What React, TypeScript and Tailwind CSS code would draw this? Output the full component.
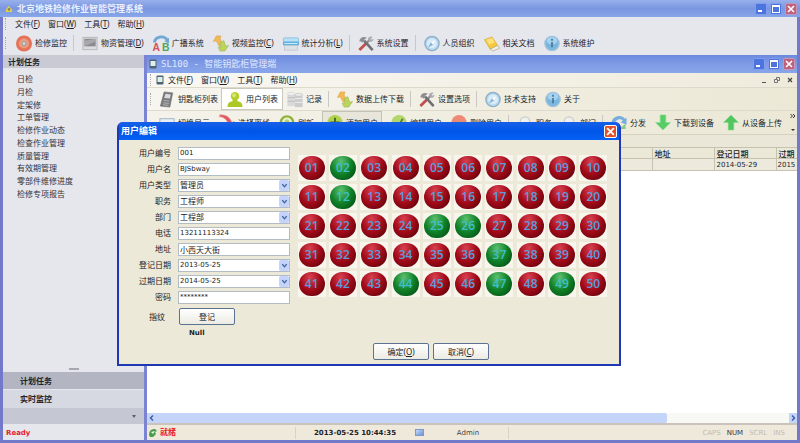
import type { ReactNode } from "react";

type IconName =
  | "monitor" | "goods" | "broadcast" | "swap" | "stats" | "tools" | "compass" | "docs" | "info"
  | "key" | "user" | "database" | "view" | "offline" | "refresh" | "add" | "edit" | "remove"
  | "magnify" | "dispatch" | "download" | "upload";

const drawings: Record<IconName, ReactNode> = {
  monitor: (
    <>
      <circle cx="9" cy="9" r="8.500" fill="#e5735a" />
      <circle cx="9" cy="9" r="5.400" fill="#ee9a80" />
      <circle cx="9" cy="9" r="3" fill="#a9a49f" />
      <circle cx="9" cy="9" r="1.400" fill="#e2d7d0" />
    </>
  ),
  goods: (
    <>
      <rect x="1.500" y="2.500" width="15" height="13" fill="#dcdcde" stroke="#b5b5b9" />
      <rect x="3" y="4" width="12" height="8" fill="#8c8c90" />
      <path d="M3 12V6l12-2v3z" fill="#a9a9ad" />
    </>
  ),
  broadcast: (
    <>
      <path d="M2 8C3 1 13 0 16 6" fill="none" stroke="#6fa9d6" strokeWidth="3" />
      <path d="M17.500 3v6l-5-2z" fill="#6fa9d6" />
      <text x="0" y="17" fontSize="11" fontWeight="700" fontFamily="Liberation Sans, sans-serif" fill="#d4525a">A</text>
      <text x="10" y="17" fontSize="11" fontWeight="700" fontFamily="Liberation Sans, sans-serif" fill="#4fa653">B</text>
    </>
  ),
  swap: (
    <>
      <path d="M4 1h5l-1 3 3 6-4 2-3-6-3 1z" fill="#f2b955" stroke="#dba043" strokeWidth=".6" />
      <path d="M13 17H8l-2-4 3 0-1-5 4-2 2 6 3-1z" fill="#bcd45c" stroke="#94b548" strokeWidth=".6" />
    </>
  ),
  stats: (
    <>
      <rect x="1" y="3" width="16" height="5" rx="1" fill="#b8dff2" stroke="#79b9dc" strokeWidth=".7" />
      <rect x="0.500" y="7" width="17" height="4" rx="1" fill="#5eb0de" />
      <rect x="2" y="11" width="14" height="5" fill="#dbe1e6" stroke="#b3bcc4" strokeWidth=".6" />
      <path d="M2 9h14" stroke="#d7effb" />
    </>
  ),
  tools: (
    <>
      <path d="M2 16l7-7" stroke="#c0504f" strokeWidth="3" />
      <path d="M9 9l4-4" stroke="#8d8d92" strokeWidth="2.400" />
      <path d="M16 16L7 6" stroke="#6f6f74" strokeWidth="2.800" />
      <path d="M2 7C2 3 6 1 10 3L7 5l1 2-3 1-1-1z" fill="#8d8d92" />
      <path d="M11 5c0-3 3-4 5-3l-2 2 1 1 2-1c0 2-2 4-4 3z" fill="#aaaab0" />
    </>
  ),
  compass: (
    <>
      <circle cx="9" cy="9" r="7.500" fill="#b9d9ef" stroke="#8fb0ca" strokeWidth="1.500" />
      <circle cx="9" cy="9" r="5.300" fill="#d9ecf8" />
      <path d="M13.500 4.500l-3.300 5.700-5.700 3.300 3.300-5.700z" fill="#8ab6d8" />
      <path d="M13.500 4.500l-3.300 5.700-2.400-2.400z" fill="#fff" />
    </>
  ),
  docs: (
    <>
      <path d="M1 5l8-3 6 9-8 4z" fill="#f6c93c" stroke="#d9a52c" strokeWidth=".7" />
      <path d="M3 5l6-2 3 5-6 2z" fill="#fbe27d" />
      <path d="M7 15l8-4 2 3-7 3z" fill="#ececec" stroke="#b8a87c" strokeWidth=".7" />
    </>
  ),
  info: (
    <>
      <circle cx="9" cy="9" r="7.500" fill="#7db6dd" stroke="#9cc1dc" strokeWidth="1.500" />
      <ellipse cx="9" cy="6" rx="5.500" ry="4" fill="#a6d2ee" />
      <path d="M9 7.500V13M9 4v2" stroke="#3c6f99" strokeWidth="1.600" />
    </>
  ),
  key: (
    <>
      <path d="M6 1l9 1-3 15-10-1z" fill="#7b7b7e" stroke="#636366" strokeWidth=".6" />
      <path d="M7.500 3l5.500.7-1 4.300-6-.7z" fill="#d7dadc" />
      <path d="M5.500 10l6 .7M5 12.500l6 .7M4.700 14.500l6 .7" stroke="#b6b6b8" />
    </>
  ),
  user: (
    <>
      <circle cx="9" cy="5.500" r="4.500" fill="#b7cf2e" />
      <path d="M1 17c0-5 3-6 5-6l1-2h4l1 2c2 0 5 1 5 6z" fill="#adc825" />
      <circle cx="8" cy="4.500" r="2" fill="#d8e674" />
    </>
  ),
  database: (
    <>
      <path d="M1 3h8v13H1z" fill="#d9d9d9" />
      <ellipse cx="5" cy="3" rx="4" ry="1.700" fill="#f1f1f1" stroke="#c4c4c4" strokeWidth=".5" />
      <path d="M1 7h8M1 11h8" stroke="#bdbdbd" />
      <path d="M9 4h8v13H9z" fill="#cbcbcd" />
      <ellipse cx="13" cy="4" rx="4" ry="1.700" fill="#e9e9e9" stroke="#b4b4b4" strokeWidth=".5" />
      <path d="M9 8h8M9 12h8" stroke="#eee" />
    </>
  ),
  view: <rect x="1.500" y="5" width="15" height="10" fill="#e9eef5" stroke="#9fb0c6" />,
  offline: <path d="M1 1c8-1 12 4 13 8l3-1-4 7-6-4 3-1C9 6 5 3 1 3z" fill="#e0585e" stroke="#eaa0a2" strokeWidth=".8" />,
  refresh: (
    <>
      <circle cx="9" cy="9" r="6.500" fill="#eef4d2" stroke="#8fb23c" strokeWidth="2.600" />
      <circle cx="9" cy="8" r="2.500" fill="#b9cf70" />
    </>
  ),
  add: (
    <>
      <circle cx="9" cy="9" r="8" fill="#b3d04a" />
      <path d="M9 4v10M4 9h10" stroke="#45652a" strokeWidth="2" />
    </>
  ),
  edit: (
    <>
      <circle cx="9" cy="9" r="8" fill="#b3d66b" />
      <path d="M5 9l3 4 5-8" fill="none" stroke="#587f33" strokeWidth="1.800" />
    </>
  ),
  remove: (
    <>
      <circle cx="9" cy="9" r="8" fill="#ec8a74" />
      <path d="M5 10h8" stroke="#fff" strokeWidth="2" />
    </>
  ),
  magnify: (
    <>
      <circle cx="9" cy="8" r="5" fill="#efefee" stroke="#cacaca" strokeWidth="1.300" />
      <path d="M12 12l4 4" stroke="#c0c0c0" strokeWidth="2" />
    </>
  ),
  dispatch: (
    <>
      <path d="M1 9C2 2 12 0 15 5l2-1v7l-6-2 2-2C10 4 5 6 5 10z" fill="#76ace0" />
      <path d="M14 12l2-2v6H8z" fill="#86c98a" />
    </>
  ),
  download: <path d="M6 1h6v8h5l-8 8-8-8h5z" fill="#58cd66" stroke="#8ade92" strokeWidth=".7" />,
  upload: <path d="M6 17h6V9h5L9 1 1 9h5z" fill="#52c560" stroke="#8ade92" strokeWidth=".7" />,
};

function Icon({ name }: { name: IconName }) {
  return (
    <svg viewBox="0 0 18 18" className="h-[17px] w-[18px] shrink-0" aria-hidden="true">
      {drawings[name]}
    </svg>
  );
}

function Hot({ text, hotkey }: { text: string; hotkey?: string }) {
  return (
    <span>
      {text}
      {hotkey && <>(<u>{hotkey}</u>)</>}
    </span>
  );
}

function Tool({ icon, text, hotkey }: { icon: IconName; text: string; hotkey?: string }) {
  return (
    <button type="button" className="flex h-full shrink-0 items-center gap-[2px] whitespace-nowrap">
      <Icon name={icon} />
      <Hot text={text} hotkey={hotkey} />
    </button>
  );
}

function Grip() {
  return <span className="h-3 w-0.5 shrink-0 border-l border-dotted border-[#a9a9b4]" />;
}

function MenuBar() {
  return (
    <nav className="flex items-center gap-[8px]">
      <button type="button"><Hot text="文件" hotkey="F" /></button>
      <button type="button"><Hot text="窗口" hotkey="W" /></button>
      <button type="button"><Hot text="工具" hotkey="T" /></button>
      <button type="button"><Hot text="帮助" hotkey="H" /></button>
    </nav>
  );
}

function CaptionButtons() {
  return (
    <div className="flex gap-[3px]">
      <button type="button" aria-label="最小化" className="flex h-3 w-3 items-end rounded-xs border border-[#7f9cee] bg-[#4d74de] p-0.5">
        <span className="h-0.5 w-1 bg-white" />
      </button>
      <button type="button" aria-label="最大化" className="h-3 w-3 rounded-xs border border-[#7f9cee] bg-[#4d74de] p-px">
        <span className="block h-2 w-2 border border-t-2 border-white" />
      </button>
      <button type="button" aria-label="关闭" className="h-3 w-3 rounded-xs border border-[#c596bd] bg-[#c0617c] p-px">
        <Cross />
      </button>
    </div>
  );
}

function Cross() {
  return (
    <svg viewBox="0 0 8 8" className="block h-full w-full" aria-hidden="true">
      <path d="M1 1l6 6M7 1L1 7" stroke="#fff" strokeWidth="1.600" />
    </svg>
  );
}

function DeviceIcon() {
  return (
    <svg viewBox="0 0 8 10" className="h-[10px] w-2 shrink-0" aria-hidden="true">
      <rect x=".5" y=".5" width="7" height="9" rx="1" fill="#4d6477" />
      <rect x="1.500" y="2" width="5" height="5" fill="#dff0ea" />
    </svg>
  );
}

const tasks = ["日检", "月检", "定架修", "工单管理", "检修作业动态", "检查作业管理", "质量管理", "有效期管理", "零部件维修进度", "检修专项报告"];

function Sidebar() {
  return (
    <aside className="flex w-[141px] shrink-0 flex-col">
      <h2 className="h-[13px] bg-[#c9cad4] pl-[5px] text-[8px] leading-[13px] font-bold">计划任务</h2>
      <ul className="mt-[5px] grid h-[127px] grid-rows-10 pl-[14px] text-[#33333a]">
        {tasks.map((task) => (
          <li key={task} className="flex items-center">
            <button type="button">{task}</button>
          </li>
        ))}
      </ul>
      <div className="flex-1" />
      <div className="mx-auto mb-0.5 h-0.5 w-[10px] bg-[#a5a7b2]" />
      <button type="button" className="h-[17px] bg-[#b3b6c2] pl-[17px] text-left font-bold">计划任务</button>
      <button type="button" className="h-[19px] border-t border-[#e6e7ee] bg-[#d6d8e2] pl-[17px] text-left font-bold">实时监控</button>
      <div className="flex h-4 items-center justify-end bg-[#c5c7d3] pr-2">
        <svg viewBox="0 0 4 3" className="h-[3px] w-1" aria-hidden="true"><path d="M0 0h4L2 3z" fill="#5c5f70" /></svg>
      </div>
      <p className="h-[16px] pl-[3px] font-['DejaVu_Sans',sans-serif] text-[7px] leading-[18px] font-bold text-[#e8202c]">Ready</p>
    </aside>
  );
}

function Arrow({ className, d }: { className: string; d: string }) {
  return (
    <svg viewBox="0 0 8 8" className={className} aria-hidden="true">
      <path d={d} fill="none" stroke="#3f5f9f" strokeWidth="1.500" />
    </svg>
  );
}

function DeviceWindow() {
  return (
    <section className="flex min-w-0 flex-1 flex-col bg-[#f0ecdd]">
      <header className="flex h-[18px] shrink-0 items-center gap-1 bg-linear-to-b from-[#6c8ade] via-[#7f9be4] to-[#89a5ea] px-0.5 text-[#dfe8ff]">
        <DeviceIcon />
        <h2 className="flex-1 font-['DejaVu_Sans_Mono','Noto_Sans_CJK_SC',monospace] text-[9px]">SL100 - 智能钥匙柜管理端</h2>
        <CaptionButtons />
      </header>
      <div className="flex h-[14px] shrink-0 items-center gap-[4px] bg-linear-to-r from-[#f8f7f2] to-[#efebdc] pr-1 pl-[3px]">
        <Grip />
        <DeviceIcon />
        <div className="flex-1"><MenuBar /></div>
        <div className="flex gap-[7px] text-[#5b5b5b]">
          <button type="button" aria-label="最小化子窗口" className="flex h-[6px] w-[5px] items-end"><span className="h-px w-1 bg-[#555]" /></button>
          <button type="button" aria-label="还原子窗口">
            <svg viewBox="0 0 6 6" className="h-[6px] w-[6px]" aria-hidden="true"><path d="M.5 2.500h3v3h-3zM2.500 2V.5h3v3H4" fill="none" stroke="#666" strokeWidth=".9" /></svg>
          </button>
          <button type="button" aria-label="关闭子窗口">
            <svg viewBox="0 0 6 6" className="h-[6px] w-[6px]" aria-hidden="true"><path d="M1 1l4 4M5 1L1 5" stroke="#444" strokeWidth="1.200" /></svg>
          </button>
        </div>
      </div>
      <div className="flex h-[24px] shrink-0 items-center border-t border-b border-[#dedacb] bg-linear-to-r from-[#f6f5ef] to-[#ece8d6] pl-[3px]">
        <Grip />
        <div className="ml-[6px] flex h-full items-center gap-[3px]">
          <Tool icon="key" text="钥匙柜列表" />
          <div className="h-full border border-[#c9c8bf] bg-white px-1"><Tool icon="user" text="用户列表" /></div>
          <Tool icon="database" text="记录" />
        </div>
        <Divider />
        <Tool icon="swap" text="数据上传下载" />
        <Divider />
        <Tool icon="tools" text="设置选项" />
        <Divider />
        <div className="flex h-full gap-[8px]">
          <Tool icon="compass" text="技术支持" />
          <Tool icon="info" text="关于" />
        </div>
      </div>
      <div className="flex h-[24px] shrink-0 items-center border-b border-[#d6d2c2] bg-linear-to-r from-[#f4f2ea] to-[#ece8d6] pl-[11px]">
        <div className="flex h-full items-center gap-[8px]">
          <Tool icon="view" text="切换显示" />
          <Tool icon="offline" text="选择离线" />
          <Tool icon="refresh" text="刷新" />
          <div className="h-full border border-[#c3c2b6] bg-[#e8e6da] px-[3px]"><Tool icon="add" text="添加用户" /></div>
          <Tool icon="edit" text="编辑用户" />
          <Tool icon="remove" text="删除用户" />
        </div>
        <Divider />
        <div className="flex h-full gap-[8px]">
          <Tool icon="magnify" text="职务" />
          <Tool icon="magnify" text="部门" />
        </div>
        <Divider />
        <div className="flex h-full gap-[8px]">
          <Tool icon="dispatch" text="分发" />
          <Tool icon="download" text="下载到设备" />
          <Tool icon="upload" text="从设备上传" />
        </div>
        <button type="button" aria-label="更多工具" className="ml-auto pr-px">
          <svg viewBox="0 0 6 20" className="h-5 w-[6px]" aria-hidden="true">
            <path d="M.5 1l2 2-2 2M3 1l2 2-2 2" fill="none" stroke="#333" />
            <path d="M1 16h4l-2 2z" fill="#333" />
          </svg>
        </button>
      </div>
      <div className="h-[12px] shrink-0 bg-[#ebe7d8]" />
      <div className="flex-1 overflow-hidden bg-white">
        <table className="w-full table-fixed border-collapse text-left">
          <thead>
            <tr className="h-[11px] border-t border-b border-[#c6c2b2] bg-[#ece8d8]">
              <th className="p-0" aria-label="用户" />
              <th className="w-[62px] border-l border-[#c6c2b2] p-0 pl-0.5 leading-[9px] font-medium">地址</th>
              <th className="w-[62px] border-l border-[#c6c2b2] p-0 pl-0.5 leading-[9px] font-medium">登记日期</th>
              <th className="w-[21px] border-l border-[#c6c2b2] p-0 pl-0.5 leading-[9px] font-medium whitespace-nowrap">过期</th>
            </tr>
          </thead>
          <tbody className="font-['DejaVu_Sans',sans-serif] text-[7px]">
            <tr className="h-[12px] border-b border-[#c6c2b2] bg-[#edeadd]">
              <td className="p-0" />
              <td className="border-l border-[#c6c2b2] p-0" />
              <td className="border-l border-[#c6c2b2] p-0 pl-0.5 leading-[10px]">2014-05-29</td>
              <td className="border-l border-[#c6c2b2] p-0 pl-px leading-[10px] whitespace-nowrap">2015</td>
            </tr>
          </tbody>
        </table>
      </div>
      <div className="flex h-[10px] shrink-0 items-center bg-[#f8f8f5]">
        <div className="flex h-full w-4/5 items-center rounded-r-xs bg-[#c5d5fa]"><Arrow className="ml-px h-2 w-2" d="M5 1.500L2.500 4 5 6.500" /></div>
        <div className="ml-auto flex h-full items-center bg-[#c5d5fa]"><Arrow className="h-2 w-2" d="M3 1.500L5.500 4 3 6.500" /></div>
      </div>
      <footer className="flex h-[17px] shrink-0 items-center border-t-2 border-[#c9c3bb] bg-[#efe9dc] font-['DejaVu_Sans','Noto_Sans_CJK_SC',sans-serif] text-[7px]">
        <svg viewBox="0 0 10 10" className="ml-px h-[10px] w-[10px]" aria-hidden="true">
          <path d="M1 7c0-4 2-6 6-6l2 2-2 1 1 2-3 3-3 0z" fill="#4d9b4f" />
          <path d="M3 4l4-1-2 3z" fill="#e5f1d8" />
        </svg>
        <span className="w-[138px] border-r border-[#d9d3c4] pl-0.5 text-[8px] font-bold text-[#e8202c]">就绪</span>
        <strong className="w-[119px] pl-[18px]">2013-05-25 10:44:35</strong>
        <span className="h-[7px] w-[9px] border border-[#7c98cc] bg-linear-to-br from-[#c6d8f4] to-[#6d92d2]" />
        <span className="w-[85px] border-r border-[#d9d3c4] pl-[4px] text-center text-[#444]">Admin</span>
        <div className="ml-auto flex gap-[6px] pr-3 text-[#c0bcb0]">
          <span>CAPS</span><span className="text-[#333]">NUM</span><span>SCRL</span><span>INS</span>
        </div>
      </footer>
    </section>
  );
}

function Divider() {
  return <span className="mr-[7px] ml-[6px] h-4 w-px shrink-0 bg-[#c9c8c6]" />;
}

type Field = { id: string; label: string; value: string; select?: boolean };

const fields: Field[] = [
  { id: "code", label: "用户编号", value: "001" },
  { id: "name", label: "用户名", value: "BJSbway" },
  { id: "type", label: "用户类型", value: "管理员", select: true },
  { id: "job", label: "职务", value: "工程师", select: true },
  { id: "dept", label: "部门", value: "工程部", select: true },
  { id: "phone", label: "电话", value: "13211113324" },
  { id: "address", label: "地址", value: "小西天大街" },
  { id: "start", label: "登记日期", value: "2013-05-25", select: true },
  { id: "end", label: "过期日期", value: "2014-05-25", select: true },
  { id: "password", label: "密码", value: "********" },
];

const box = "h-[13px] w-full appearance-none rounded-none border border-[#b2bcc4] bg-white py-0 pr-3 pl-px font-['DejaVu_Sans','Noto_Sans_CJK_SC',sans-serif] leading-[11px] text-[#222]";

function FieldRow({ field }: { field: Field }) {
  const size = /^[\x20-\x7e]+$/.test(field.value) ? "text-[7px]" : "text-[8px]";
  return (
    <div className="flex h-4 items-center">
      <label htmlFor={field.id} className="w-[52px] text-right">{field.label}</label>
      <div className="relative ml-[7px] flex w-[112px]">
        {field.select ? (
          <>
            <select id={field.id} defaultValue={field.value} className={`${box} ${size}`}>
              <option>{field.value}</option>
            </select>
            <span className="pointer-events-none absolute inset-y-px right-px flex w-[10px] items-center justify-center rounded-xs bg-[#c3d3fa]">
              <Arrow className="h-[7px] w-[7px]" d="M1.500 2.500L4 5.500 6.500 2.500" />
            </span>
          </>
        ) : (
          <input id={field.id} type="text" defaultValue={field.value} className={`${box} ${size}`} />
        )}
      </div>
    </div>
  );
}

const free = new Set([2, 12, 25, 26, 37, 44, 47, 49]);
const red = "from-[#d8404f] via-[#a00a18] to-[#480006] text-[#5b9bdc]";
const green = "from-[#5cc070] via-[#0f8027] to-[#033f0e] text-[#3cc0d0]";

function KeySlots() {
  return (
    <div className="grid h-[144px] w-[313px] grid-cols-10 grid-rows-5">
      {Array.from({ length: 50 }, (_, i) => i + 1).map((n) => (
        <div key={n} className="flex items-center justify-center">
          <div className="flex h-[26px] w-[28px] items-center justify-center bg-[#f8f5ed]">
            <button
              type="button"
              aria-pressed={free.has(n)}
              className={`h-6 w-[26px] rounded-full bg-radial-[at_42%_22%] font-['Open_Sans','Noto_Sans',sans-serif] text-[12px] leading-6 font-semibold ${free.has(n) ? green : red}`}
            >
              {String(n).padStart(2, "0")}
            </button>
          </div>
        </div>
      ))}
    </div>
  );
}

const push = "h-[17px] w-[56px] rounded-xs border border-[#5b7391] bg-linear-to-b from-white to-[#ecebe3] leading-[15px]";

function UserDialog() {
  return (
    <form role="dialog" aria-label="用户编辑" className="absolute top-[122px] left-[117px] w-[504px] rounded-t-md border-2 border-t-0 border-[#2038b4] bg-[#ece9d8]">
      <header className="flex h-[18px] items-center justify-between rounded-t-sm bg-linear-to-b from-[#1660e8] via-[#0055e8] to-[#0660f4] pr-0.5 pl-0.5 text-white">
        <h2 className="text-[9px] font-bold">用户编辑</h2>
        <button type="button" aria-label="关闭对话框" className="h-[13px] w-[13px] rounded-xs border border-white bg-[#e2512c] p-px"><Cross /></button>
      </header>
      <div className="flex pt-[5px]">
        <div className="w-[177px]">
          {fields.map((field) => <FieldRow key={field.id} field={field} />)}
          <div className="mt-[3px] flex items-center pl-[30px]">
            <label htmlFor="finger" className="w-[30px]">指纹</label>
            <button id="finger" type="button" className={push}>登记</button>
          </div>
          <p className="mt-[3px] pl-[70px] font-['DejaVu_Sans',sans-serif] text-[7px] leading-[10px] font-bold">Null</p>
        </div>
        <div className="pt-[9px]"><KeySlots /></div>
      </div>
      <div className="flex gap-[4px] pt-[5px] pb-[4px] pl-[254px]">
        <button type="submit" className={push}><Hot text="确定" hotkey="O" /></button>
        <button type="button" className={push}><Hot text="取消" hotkey="C" /></button>
      </div>
    </form>
  );
}

export default function App() {
  return (
    <main className="relative flex h-screen flex-col overflow-hidden bg-[#e6e6ed] font-['Noto_Sans','Noto_Sans_CJK_SC',sans-serif] text-[8px] leading-[12px] text-[#222226]">
      <header className="flex h-[17px] shrink-0 items-center gap-1 bg-linear-to-b from-[#98b0ec] via-[#7996e0] to-[#88a6ea] pr-[3px] pl-[5px] text-[#e9f0ff]">
        <svg viewBox="0 0 9 9" className="h-2 w-2" aria-hidden="true"><path d="M1 8V5l3-4 4 4v3z" fill="#e0cf55" /><circle cx="4.500" cy="5" r="1.500" fill="#8c8450" /></svg>
        <h1 className="flex-1 text-[9px] font-bold">北京地铁检修作业智能管理系统</h1>
        <CaptionButtons />
      </header>
      <div className="flex min-h-0 flex-1 flex-col border-r-3 border-b-3 border-l-3 border-[#7279cb]">
        <div className="flex h-[14px] shrink-0 items-center gap-2 pl-0.5">
          <Grip />
          <MenuBar />
        </div>
        <div className="flex h-[24px] shrink-0 items-center pl-0.5">
          <Grip />
          <div className="ml-[8px]"><Tool icon="monitor" text="检修监控" /></div>
          <Divider />
          <div className="flex gap-[8px]">
            <Tool icon="goods" text="物资管理" hotkey="D" />
            <Tool icon="broadcast" text="广播系统" />
            <Tool icon="swap" text="视频监控" hotkey="C" />
            <Tool icon="stats" text="统计分析" hotkey="L" />
          </div>
          <Divider />
          <Tool icon="tools" text="系统设置" />
          <Divider />
          <div className="flex gap-[8px]">
            <Tool icon="compass" text="人员组织" />
            <Tool icon="docs" text="相关文档" />
            <Tool icon="info" text="系统维护" />
          </div>
        </div>
        <div className="flex min-h-0 flex-1">
          <Sidebar />
          <div className="w-[3px] shrink-0 bg-[#7b84d2]" />
          <DeviceWindow />
        </div>
      </div>
      <UserDialog />
    </main>
  );
}
